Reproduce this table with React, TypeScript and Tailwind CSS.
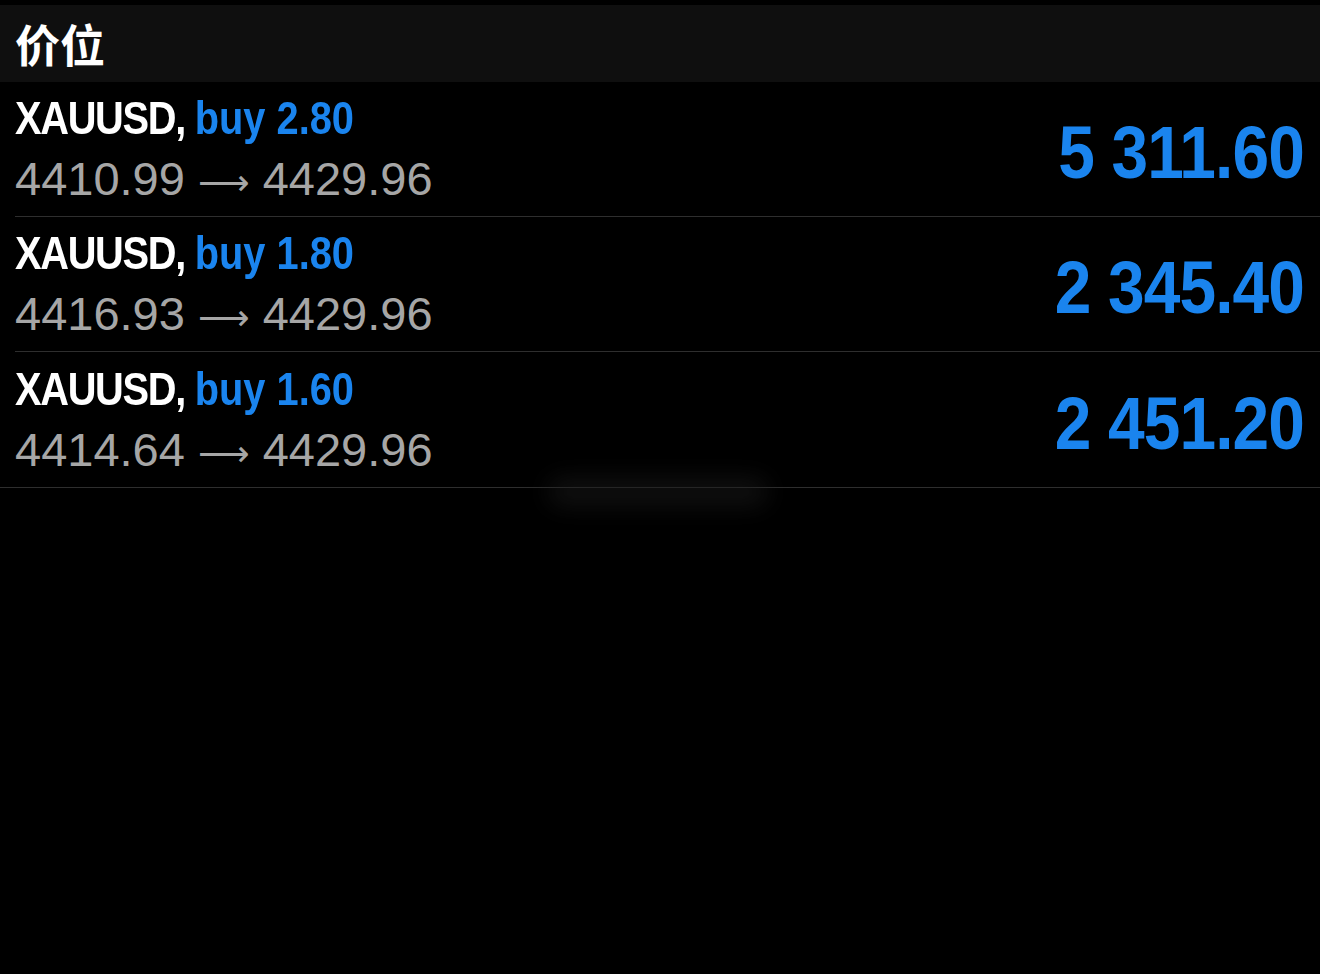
import React from "react";

const rows = [
  { vol: "2.80", open: "4410.99", profit: "5 311.60" },
  { vol: "1.80", open: "4416.93", profit: "2 345.40" },
  { vol: "1.60", open: "4414.64", profit: "2 451.20" },
];

const sans = { fontFamily: '"Liberation Sans", Arial, sans-serif' };

export default function App() {
  return (
    <div className="relative w-[1320px] h-[974px] bg-black overflow-hidden" style={sans}>
      <div className="h-[5px]" />
      <div className="h-[77px] bg-[#0f0f0f] flex items-center px-[15px]">
        <span
          className="text-white text-[45px] font-bold leading-none"
          style={{ fontFamily: '"Noto Sans CJK SC", "Liberation Sans", sans-serif' }}
        >
          价位
        </span>
      </div>
      {rows.map((r, i) => (
        <div key={i} className={i === rows.length - 1 ? "border-b border-[#2e2e2e]" : "pl-[15px]"}>
          <div
            className={
              "h-[135px] flex items-center justify-between pr-[16px] " +
              (i === rows.length - 1 ? "pl-[15px]" : "border-b border-[#2e2e2e]")
            }
          >
            <div className="flex flex-col mt-[6px]">
              <div className="h-[54px] flex items-end">
                <div className="inline-block origin-left scale-x-[0.865] whitespace-nowrap text-[46px] font-bold leading-[52px]">
                  <span className="text-white tracking-[-1.5px]">XAUUSD, </span>
                  <span className="text-[#1a84ee] tracking-[0px]">buy {r.vol}</span>
                </div>
              </div>
              <div className="pt-[4px] text-[47px] leading-[62px] text-[#a6a6a6] whitespace-nowrap">
                {r.open}{" "}
                <span style={{ fontFamily: '"DejaVu Sans", sans-serif' }} className="text-[36px]">⟶</span>{" "}
                4429.96
              </div>
            </div>
            <div className="pt-[8px]">
              <div className="inline-block origin-right scale-x-[0.89] whitespace-nowrap text-[74px] font-bold leading-none text-[#1a84ee] tracking-[-1px]">
                {r.profit}
              </div>
            </div>
          </div>
        </div>
      ))}
      <div className="absolute left-[548px] top-[478px] w-[220px] h-[28px] rounded-full bg-[#1c1c1c] blur-md opacity-60" />
    </div>
  );
}
